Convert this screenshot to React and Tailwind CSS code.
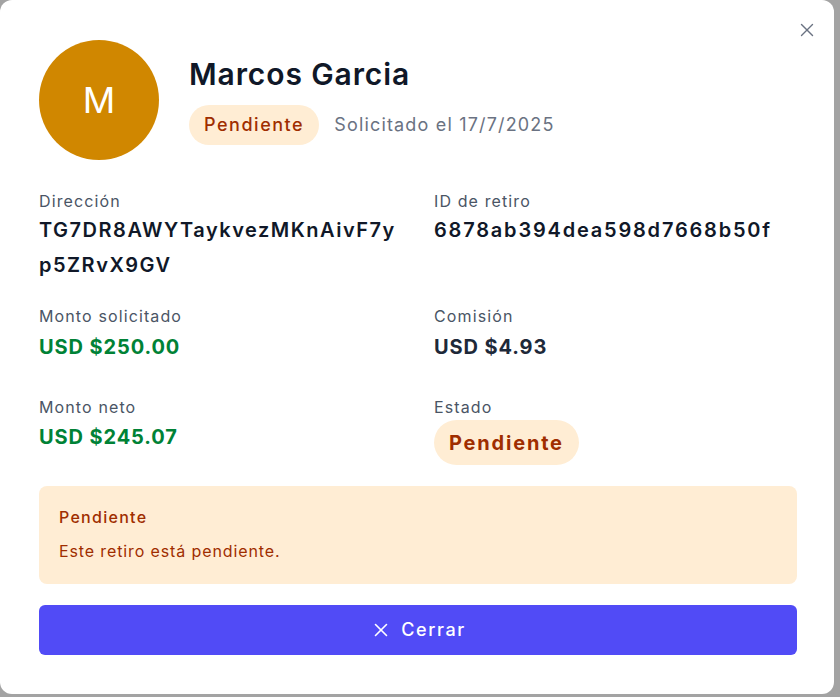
import React from "react";
import { X } from "lucide-react";

function Label({ children }) {
  return <div className="text-base leading-6 text-[#4a5565] tracking-[0.07em]">{children}</div>;
}

export default function App() {
  return (
    <div
      className="w-[840px] h-[697px] bg-[#a3a3a3] overflow-hidden"
      style={{ fontFamily: "Inter, 'Noto Sans', sans-serif" }}
    >
      <div className="relative w-[834px] h-[694px] bg-white rounded-xl flex flex-col pl-[39px] pr-[37px] pt-[40px]">
        <button className="absolute right-[16px] top-[19px] w-[22px] h-[22px] flex items-center justify-center text-[#6a7282]">
          <X size={22} strokeWidth={1.5} />
        </button>

        <div className="flex items-center gap-[30px]">
          <div className="w-[120px] h-[120px] rounded-full bg-[#d08700] flex items-center justify-center text-white text-[36px] font-normal">
            M
          </div>
          <div className="flex flex-col">
            <h2 className="text-3xl leading-9 font-semibold text-[#101828] tracking-[0.03em]">Marcos Garcia</h2>
            <div className="flex items-center gap-[15px] mt-[13px]">
              <span className="h-[40px] px-[15px] rounded-full bg-[#ffedd4] text-[#9f2d00] text-lg font-medium tracking-[0.085em] flex items-center">
                Pendiente
              </span>
              <span className="text-lg text-[#6a7282] tracking-[0.065em]">Solicitado el 17/7/2025</span>
            </div>
          </div>
        </div>

        <div className="grid grid-cols-2 gap-x-8 gap-y-[21px] mt-[29px]">
          <div>
            <Label>Dirección</Label>
            <div className="text-xl leading-[35px] font-semibold text-[#101828] break-all tracking-[0.075em]">
              TG7DR8AWYTaykvezMKnAivF7yp5ZRvX9GV
            </div>
          </div>
          <div>
            <Label>ID de retiro</Label>
            <div className="text-xl leading-[35px] font-semibold text-[#101828] break-all tracking-[0.09em]">
              6878ab394dea598d7668b50f
            </div>
          </div>

          <div className="pb-[9px]">
            <Label>Monto solicitado</Label>
            <div className="text-xl leading-[35px] pt-[2px] font-bold text-[#008236] tracking-[0.045em]">USD $250.00</div>
          </div>
          <div className="pb-[9px]">
            <Label>Comisión</Label>
            <div className="text-xl leading-[35px] pt-[2px] font-bold text-[#1e2939] tracking-[0.045em]">USD $4.93</div>
          </div>

          <div>
            <Label>Monto neto</Label>
            <div className="text-xl leading-[35px] pt-[1px] font-bold text-[#008236] tracking-[0.045em]">USD $245.07</div>
          </div>
          <div>
            <Label>Estado</Label>
            <span className="inline-flex items-center h-[45px] px-[15px] rounded-full bg-[#ffedd4] text-[#9f2d00] text-xl font-bold tracking-[0.09em] mt-px">
              Pendiente
            </span>
          </div>
        </div>

        <div className="mt-[21px] rounded-lg bg-[#ffedd4] px-5 pt-[19px] pb-[21px]">
          <div className="text-base leading-6 font-medium text-[#9f2d00] tracking-[0.08em]">Pendiente</div>
          <div className="mt-[10px] text-base leading-6 text-[#9f2d00] tracking-[0.055em]">Este retiro está pendiente.</div>
        </div>

        <button className="mt-[21px] h-[50px] rounded-md bg-[#514bf6] text-white flex items-center justify-center gap-[9px] text-lg font-medium tracking-[0.09em]">
          <X size={22} strokeWidth={1.75} />
          <span>Cerrar</span>
        </button>
      </div>
    </div>
  );
}
